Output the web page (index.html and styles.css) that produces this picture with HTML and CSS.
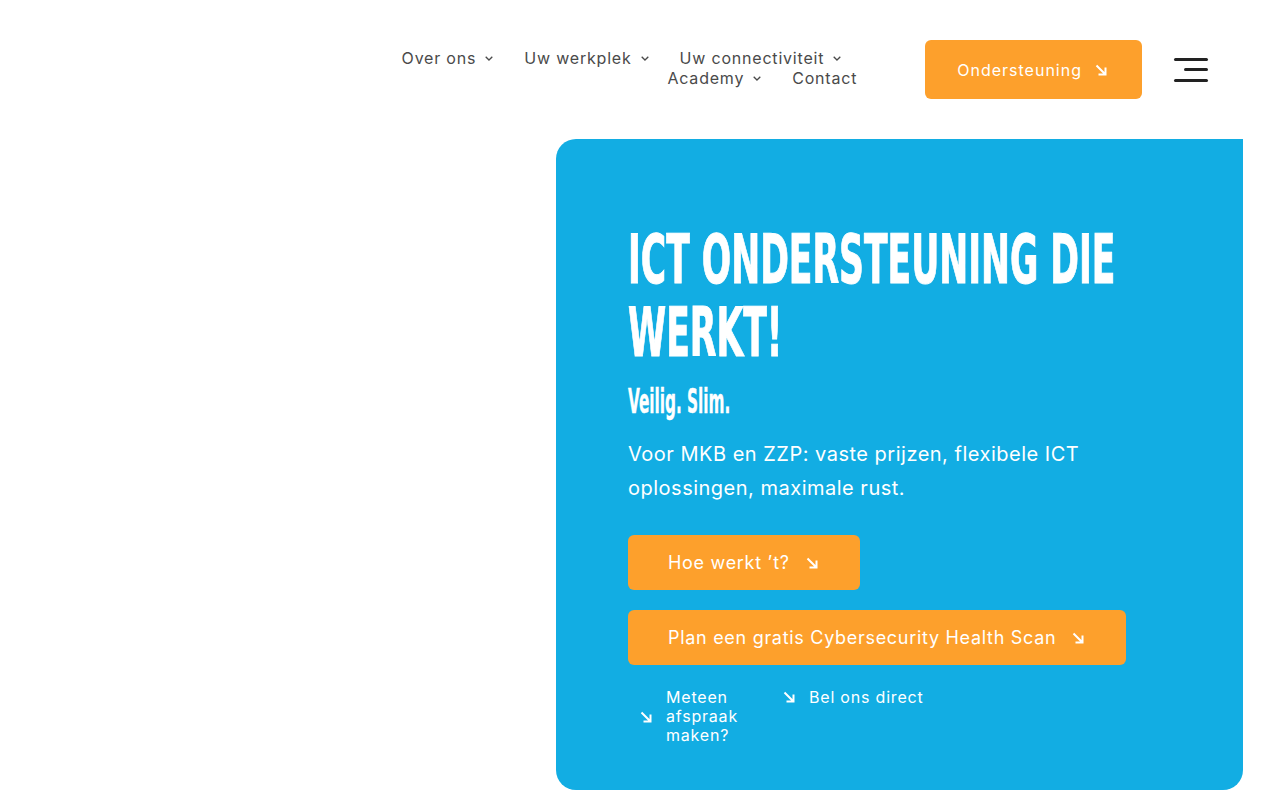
FILE: index.html
```html
<!DOCTYPE html>
<html lang="nl">
<head>
<meta charset="utf-8">
<title>ICT ondersteuning die werkt!</title>
<link rel="stylesheet" href="styles.css">
</head>
<body>
<header class="site-header">
  <nav class="main-nav">
    <ul class="nav-row nav-row-1">
      <li class="nav-item">Over ons <svg class="chev" viewBox="0 0 8 5"><polyline points="0.7,0.7 4,4 7.3,0.7"/></svg></li>
      <li class="nav-item">Uw werkplek <svg class="chev" viewBox="0 0 8 5"><polyline points="0.7,0.7 4,4 7.3,0.7"/></svg></li>
      <li class="nav-item">Uw connectiviteit <svg class="chev" viewBox="0 0 8 5"><polyline points="0.7,0.7 4,4 7.3,0.7"/></svg></li>
    </ul>
    <ul class="nav-row nav-row-2">
      <li class="nav-item">Academy <svg class="chev" viewBox="0 0 8 5"><polyline points="0.7,0.7 4,4 7.3,0.7"/></svg></li>
      <li class="nav-item">Contact</li>
    </ul>
  </nav>
  <a class="btn btn-header" href="#">Ondersteuning <svg class="arrow" viewBox="0 0 12 12"><path d="M1.5 1.5 L10.5 10.5 M10.5 3.5 V10.5 H3.5"/></svg></a>
  <button class="hamburger" aria-label="Menu"><span class="bar"></span><span class="bar bar-short"></span><span class="bar"></span></button>
</header>
<main class="hero">
  <div class="hero-media"></div>
  <section class="hero-card">
    <h1 class="hero-title"><span class="hero-line">ICT ONDERSTEUNING DIE</span><span class="hero-line">WERKT!</span></h1>
    <p class="hero-sub"><span class="hero-sub-text">Veilig. Slim.</span></p>
    <p class="hero-text">Voor MKB en ZZP: vaste prijzen, flexibele ICT oplossingen, maximale rust.</p>
    <div class="hero-actions">
      <a class="btn btn-hero" href="#">Hoe werkt ’t? <svg class="arrow" viewBox="0 0 12 12"><path d="M1.5 1.5 L10.5 10.5 M10.5 3.5 V10.5 H3.5"/></svg></a>
      <a class="btn btn-hero" href="#">Plan een gratis Cybersecurity Health Scan <svg class="arrow" viewBox="0 0 12 12"><path d="M1.5 1.5 L10.5 10.5 M10.5 3.5 V10.5 H3.5"/></svg></a>
    </div>
    <div class="hero-links">
      <a class="text-link link-narrow" href="#"><svg class="arrow" viewBox="0 0 12 12"><path d="M1.5 1.5 L10.5 10.5 M10.5 3.5 V10.5 H3.5"/></svg><span>Meteen afspraak maken?</span></a>
      <a class="text-link link-top" href="#"><svg class="arrow" viewBox="0 0 12 12"><path d="M1.5 1.5 L10.5 10.5 M10.5 3.5 V10.5 H3.5"/></svg><span>Bel ons direct</span></a>
    </div>
  </section>
</main>
</body>
</html>
```

FILE: styles.css
```css
* { box-sizing: border-box; }
html, body { margin: 0; padding: 0; background: #ffffff; }
body {
  font-family: "Inter", "DejaVu Sans", sans-serif;
  color: #444444;
  width: 1280px;
  height: 800px;
  overflow: hidden;
}
a { text-decoration: none; color: inherit; }

.site-header {
  height: 139px;
  display: flex;
  justify-content: flex-end;
  align-items: center;
  padding-right: 72px;
}
.main-nav {
  display: flex;
  flex-direction: column;
  align-items: flex-end;
  margin-right: 68px;
  padding-bottom: 4px;
}
.nav-row {
  list-style: none;
  margin: 0;
  padding: 0;
  display: flex;
  gap: 31px;
}
.nav-row-1 { padding-right: 16px; }
.nav-item {
  font-size: 16px;
  line-height: 20px;
  color: #4a4a4a;
  display: flex;
  align-items: center;
  gap: 9px;
  letter-spacing: 0.8px;
}
.chev {
  width: 8px;
  height: 5px;
  fill: none;
  stroke: #4a4a4a;
  stroke-width: 1.3;
  margin-top: 2px;
}

.btn {
  display: inline-flex;
  align-items: center;
  background: #fda02c;
  color: #ffffff;
  border-radius: 6px;
}
.arrow {
  width: 12px;
  height: 12px;
  fill: none;
  stroke: #ffffff;
  stroke-width: 2;
  flex: none;
}
.btn-header {
  height: 59px;
  padding: 0 35px 0 32px;
  font-size: 16px;
  gap: 13px;
  letter-spacing: 1px;
  margin-right: 32px;
}
.hamburger {
  width: 34px;
  height: 24px;
  padding: 0;
  border: 0;
  background: transparent;
  display: flex;
  flex-direction: column;
  justify-content: space-between;
  align-items: flex-end;
}
.bar {
  display: block;
  width: 34px;
  height: 3px;
  border-radius: 2px;
  background: #222222;
}
.bar-short { width: 24px; }

.hero {
  display: grid;
  grid-template-columns: 556px 687px;
}
.hero-card {
  background: #12ade3;
  height: 651px;
  border-radius: 20px 0 20px 20px;
  padding: 84px 72px 0 72px;
  color: #ffffff;
}
.hero-title {
  margin: 0;
  font-family: "DejaVu Sans Condensed", "DejaVu Sans", sans-serif;
  font-weight: 700;
  font-size: 68px;
  line-height: 73px;
  letter-spacing: 0;
  -webkit-text-stroke: 1px #ffffff;
}
.hero-line {
  display: block;
  white-space: nowrap;
  transform: scaleX(0.565);
  transform-origin: left center;
}
.hero-sub {
  margin: 12px 0 0;
  font-family: "DejaVu Sans Condensed", "DejaVu Sans", sans-serif;
  font-weight: 700;
  font-size: 34px;
  line-height: 40px;
  -webkit-text-stroke: 0.4px #ffffff;
}
.hero-sub-text {
  display: inline-block;
  white-space: nowrap;
  transform: scaleX(0.5);
  transform-origin: left center;
}
.hero-text {
  margin: 16px 0 0;
  font-size: 20px;
  line-height: 34px;
  max-width: 520px;
  letter-spacing: 0.5px;
}
.hero-actions {
  margin-top: 30px;
  display: flex;
  flex-direction: column;
  align-items: flex-start;
  gap: 20px;
}
.btn-hero {
  height: 55px;
  padding: 0 42px 0 40px;
  font-size: 18px;
  gap: 16px;
  letter-spacing: 0.7px;
}
.hero-links {
  margin-top: 23px;
  display: flex;
  align-items: flex-start;
  gap: 37px;
  padding-left: 12px;
}
.text-link {
  display: flex;
  align-items: center;
  gap: 14px;
  font-size: 16px;
  line-height: 19px;
  letter-spacing: 0.8px;
}
.link-narrow span { width: 80px; }
.link-top { align-items: flex-start; }
.link-top .arrow { margin-top: 3px; }
```
